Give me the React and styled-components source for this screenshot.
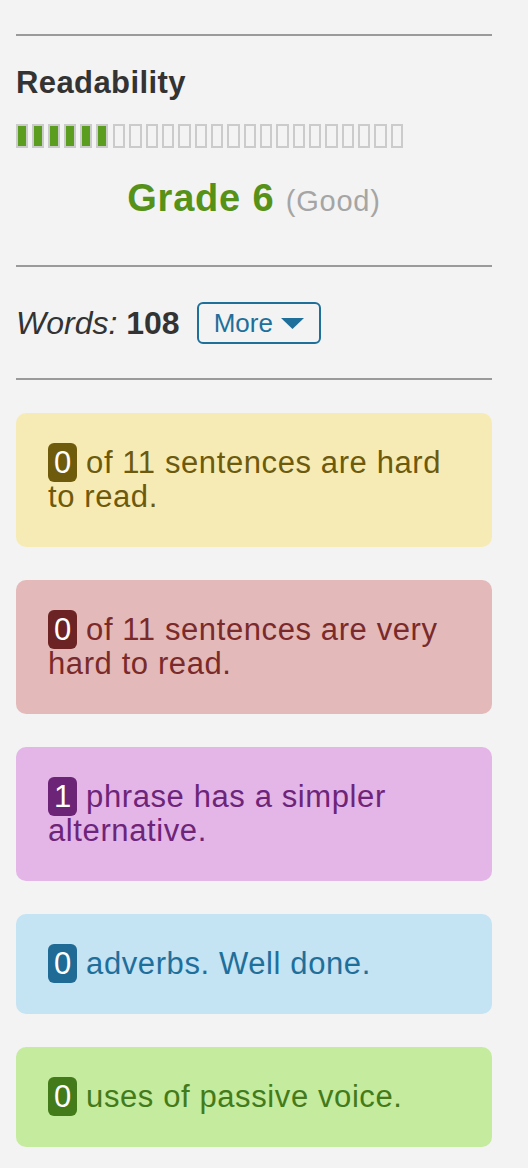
import styled, { createGlobalStyle } from 'styled-components'

const GlobalStyle = createGlobalStyle`
  body {
    margin: 0;
    background: #f3f3f3;
    font-family: "Liberation Sans", Arial, sans-serif;
  }
`

const cards = [
  { n: 0, text: 'of 11 sentences are hard to read.', bg: '#f7ebb5', fg: '#6d5a0c', badge: '#6e5c0c' },
  { n: 0, text: 'of 11 sentences are very hard to read.', bg: '#e4b9b9', fg: '#7a2a2a', badge: '#6c2323' },
  { n: 1, text: 'phrase has a simpler alternative.', bg: '#e3b6e7', fg: '#6e2479', badge: '#6c2476' },
  { n: 0, text: 'adverbs. Well done.', bg: '#c4e3f3', fg: '#1f6f9b', badge: '#1f6b96' },
  { n: 0, text: 'uses of passive voice.', bg: '#c5eb9e', fg: '#437a1a', badge: '#437a1a' }
]

const segments = Array.from({ length: 24 }, (_, i) => i < 6)

export default function App() {
  return (
    <Sidebar>
      <GlobalStyle />
      <Rule />
      <Section>
        <Title>Readability</Title>
        <Meter>
          {segments.map((on, i) => (
            <Segment key={i} $on={on} $first={i === 6} />
          ))}
        </Meter>
        <Grade>
          Grade 6 <span>(Good)</span>
        </Grade>
      </Section>
      <Rule />
      <WordsRow>
        <Words>
          <em>Words:</em> <strong>108</strong>
        </Words>
        <MoreButton>
          More
          <svg width="23" height="11" viewBox="0 0 23 11">
            <path d="M0 0h23L11.5 11z" fill="#1f6f9b" />
          </svg>
        </MoreButton>
      </WordsRow>
      <Rule />
      <Cards>
        {cards.map((c, i) => (
          <Card key={i} $bg={c.bg} $fg={c.fg}>
            <Badge $bg={c.badge}>{c.n}</Badge> {c.text}
          </Card>
        ))}
      </Cards>
    </Sidebar>
  )
}

const Sidebar = styled.div`
  width: 476px;
  padding: 34px 0 0 16px;
  color: #333;
`

const Rule = styled.hr`
  margin: 0;
  border: 0;
  height: 2px;
  background: #9a9a9a;
`

const Section = styled.div`
  padding: 29px 0 42px 0;
`

const Title = styled.h2`
  margin: 0;
  font-size: 31px;
  font-weight: 700;
  letter-spacing: 0.4px;
  color: #333;
  line-height: 36px;
`

const Meter = styled.div`
  display: flex;
  gap: 4px;
  margin-top: 23px;
`

const Segment = styled.div`
  box-sizing: border-box;
  width: ${p => (p.$on ? '12px' : '12.33px')};
  height: 24px;
  margin-left: ${p => (p.$first ? '1px' : '0')};
  border: 2px solid #cbcbcb;
  background: ${p => (p.$on ? '#5b9e1f' : 'transparent')};
`

const Grade = styled.div`
  margin-top: 28px;
  text-align: center;
  font-size: 38px;
  font-weight: 700;
  letter-spacing: 0.8px;
  color: #569118;
  line-height: 44px;
  span {
    font-size: 29px;
    font-weight: 400;
    letter-spacing: 0.8px;
    color: #a5a5a5;
  }
`

const WordsRow = styled.div`
  display: flex;
  align-items: center;
  gap: 17px;
  padding: 35px 0 34px 0;
`

const Words = styled.div`
  font-size: 32px;
  color: #333;
  em {
    font-style: italic;
  }
  strong {
    font-weight: 700;
  }
`

const MoreButton = styled.button`
  display: flex;
  align-items: center;
  gap: 8px;
  box-sizing: border-box;
  height: 42px;
  padding: 0 15px 0 15px;
  border: 2px solid #1f6f9b;
  border-radius: 6px;
  background: transparent;
  color: #1f6f9b;
  font-family: "Liberation Sans", Arial, sans-serif;
  font-size: 26px;
`

const Cards = styled.div`
  display: flex;
  flex-direction: column;
  gap: 33px;
  padding-top: 33px;
`

const Card = styled.div`
  padding: 33px 32px;
  border-radius: 10px;
  background: ${p => p.$bg};
  color: ${p => p.$fg};
  font-size: 31px;
  letter-spacing: 0.6px;
  line-height: 34px;
`

const Badge = styled.span`
  padding: 2px 5px 2px 6px;
  border-radius: 6px;
  background: ${p => p.$bg};
  color: #fff;
`
